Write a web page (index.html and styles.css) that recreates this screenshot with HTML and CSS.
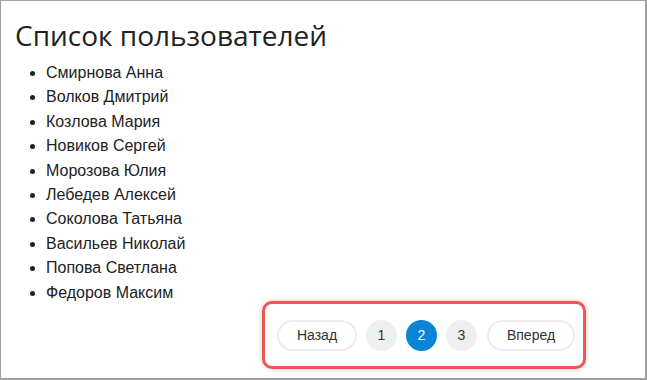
FILE: index.html
```html
<!DOCTYPE html>
<html lang="ru">
<head>
    <meta charset="UTF-8">
    <meta name="viewport" content="width=device-width, initial-scale=1.0">
    <title>Список пользователей</title>
    <link rel="stylesheet" href="styles.css">
</head>
<body>
    <div class="page">
        <h1>Список пользователей</h1>
        <ul class="users">
            <li>Смирнова Анна</li>
            <li>Волков Дмитрий</li>
            <li>Козлова Мария</li>
            <li>Новиков Сергей</li>
            <li>Морозова Юлия</li>
            <li>Лебедев Алексей</li>
            <li>Соколова Татьяна</li>
            <li>Васильев Николай</li>
            <li>Попова Светлана</li>
            <li>Федоров Максим</li>
        </ul>

        <div class="pager-row">
            <div class="pager">
                <button class="pill">Назад</button>
                <button class="num">1</button>
                <button class="num active">2</button>
                <button class="num">3</button>
                <button class="pill next">Вперед</button>
            </div>
        </div>
    </div>
</body>
</html>
```

FILE: styles.css
```css
html, body{
    margin: 0;
    padding: 0;
    background: #fff;
}
.page{
    box-sizing: border-box;
    width: 647px;
    height: 380px;
    border: 1px solid #a0a0a0;
    border-right-width: 2px;
    border-bottom-width: 2px;
    padding: 15px 12px 0 12px;
    font-family: "Liberation Sans", Arial, sans-serif;
    color: #222;
}
h1{
    font-family: "Open Sans", sans-serif;
    font-weight: 400;
    font-size: 28px;
    line-height: normal;
    margin: 0 0 7px 0;
    padding-left: 2px;
    color: #222;
}
.users{
    margin: 0;
    padding-left: 33px;
    font-size: 16px;
    line-height: 24.4px;
}

/* пагинация справа */
.pager-row{
    display: flex;
    justify-content: flex-end;
    margin-top: -4px;
    padding-right: 47px;
}
.pager{
    display: flex;
    align-items: center;
    gap: 9px;
    width: 324px;
    height: 68px;
    box-sizing: border-box;
    padding: 0 8px 0 12px;
    border: 3px solid #e95757;
    border-radius: 10px;
    box-shadow: 0 0 4px rgba(233, 87, 87, 0.45);
}
.pager button{
    font-family: "Liberation Sans", Arial, sans-serif;
    font-size: 14px;
    color: #333;
    height: 31px;
    padding: 0;
    cursor: pointer;
}
.pill{
    width: 80px;
    background: #fff;
    border: 2px solid #ececec;
    border-radius: 16px;
}
.next{
    width: 88px;
    margin-left: 1px;
}
.num{
    width: 31px;
    border: none;
    border-radius: 50%;
    background: #eeeff1;
}
.num.active{
    background: #0a84d4;
    color: #fff;
}
```
